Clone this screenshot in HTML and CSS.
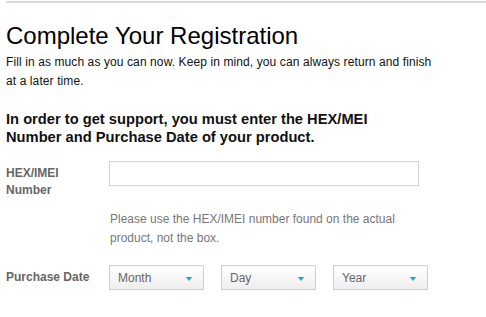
FILE: index.html
```html
<!DOCTYPE html>
<html>
<head>
<meta charset="utf-8">
<link rel="stylesheet" href="styles.css">
</head>
<body>
<div class="page">
  <h1 class="title">Complete Your Registration</h1>
  <p class="intro">Fill in as much as you can now. Keep in mind, you can always return and finish at a later time.</p>
  <h2 class="notice">In order to get support, you must enter the HEX/MEI Number and Purchase Date of your product.</h2>
  <div class="row row-hex">
    <label class="label">HEX/IMEI<br>Number</label>
    <div class="field">
      <input class="text-input" type="text">
      <p class="help">Please use the HEX/IMEI number found on the actual product, not the box.</p>
    </div>
  </div>
  <div class="row row-date">
    <label class="label">Purchase Date</label>
    <div class="selects">
      <div class="select"><span>Month</span><i class="arrow"></i></div>
      <div class="select"><span>Day</span><i class="arrow"></i></div>
      <div class="select"><span>Year</span><i class="arrow"></i></div>
    </div>
  </div>
</div>
</body>
</html>
```
FILE: styles.css
```css
html, body {
  margin: 0;
  padding: 0;
  background: #fff;
}
body {
  font-family: "Liberation Sans", Arial, sans-serif;
  color: #000;
}
.page {
  margin-left: 6px;
  border-top: 2px solid #d9d9d9;
  margin-top: 1px;
  padding-top: 18px;
}
.title {
  font-size: 24px;
  font-weight: normal;
  line-height: 30px;
  margin: 0;
  color: #000;
}
.intro {
  font-size: 12px;
  letter-spacing: 0.1px;
  line-height: 19px;
  margin: 2px 0 0 0;
  width: 430px;
  color: #111;
}
.notice {
  font-size: 14.7px;
  font-weight: bold;
  line-height: 18px;
  margin: 19px 0 0 0;
  width: 380px;
  color: #111;
}
.row {
  display: flex;
}
.label {
  width: 103px;
  flex: none;
  font-size: 12px;
  font-weight: bold;
  color: #666;
  line-height: 17px;
}
.row-hex {
  margin-top: 15px;
}
.row-hex .label {
  padding-top: 4px;
}
.text-input {
  display: block;
  box-sizing: border-box;
  width: 310px;
  height: 25px;
  margin: 0;
  border: 1px solid #d2d2d2;
  background: #fff;
  padding: 0 6px;
}
.help {
  font-size: 12px;
  line-height: 19px;
  color: #777;
  margin: 24px 0 0 1px;
  width: 300px;
}
.row-date {
  margin-top: 17px;
  align-items: center;
}
.selects {
  display: flex;
  gap: 17px;
}
.select {
  box-sizing: border-box;
  width: 95px;
  height: 25px;
  border: 1px solid #d0d0d0;
  background: linear-gradient(#ffffff, #eeeeee);
  display: flex;
  align-items: center;
  justify-content: space-between;
  padding: 0 11px 0 8px;
  font-size: 12px;
  color: #666;
}
.arrow {
  width: 0;
  height: 0;
  border-left: 3.5px solid transparent;
  border-right: 3.5px solid transparent;
  border-top: 4px solid #1ea0dc;
  margin-top: 3px;
}
```
